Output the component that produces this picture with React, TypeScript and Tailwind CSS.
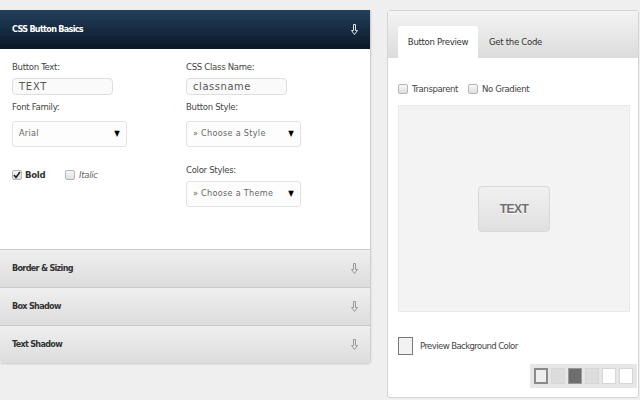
import React from "react";

const font = "font-['DejaVu_Sans_Condensed','Liberation_Sans',sans-serif]";

const Arrow: React.FC<{ className?: string }> = ({ className }) => (
    <svg width="7" height="11" viewBox="0 0 7 11" className={className}>
        <path
            d="M2.5 0.5h2v6h2l-3 4-3-4h2z"
            fill="none"
            stroke="currentColor"
            strokeWidth="1"
        />
    </svg>
);

const Box: React.FC<{ checked?: boolean }> = ({ checked }) => (
    <span className="flex h-[10px] w-[10px] items-center justify-center rounded-[2px] border border-[#b5b5b5] bg-gradient-to-b from-[#f8f8f8] to-[#dedede]">
        {checked && (
            <svg width="8" height="8" viewBox="0 0 8 8">
                <path d="M1 4l2 2.5L7 1" fill="none" stroke="#222" strokeWidth="1.6" />
            </svg>
        )}
    </span>
);

const Select: React.FC<{ label: string }> = ({ label }) => (
    <div className="flex h-[26px] w-[115px] items-center justify-between rounded-[3px] border border-[#e2e2e2] bg-[#fdfdfd] pl-[6px] pr-[6px] text-[9px] tracking-[0.3px] text-[#666]">
        <span>{label}</span>
        <span className="text-[8px] text-black">▼</span>
    </div>
);

const AccRow: React.FC<{ title: string; last?: boolean }> = ({ title, last }) => (
    <div
        className={`flex h-[38px] items-center justify-between border-t border-[#c9c9c9] bg-gradient-to-b from-[#efefef] to-[#dcdcdc] pl-[12px] pr-[12px] ${
            last ? "rounded-b-[3px]" : ""
        }`}
    >
        <span className="text-[9px] font-bold tracking-[-0.7px] text-[#333]">{title}</span>
        <Arrow className="text-[#999]" />
    </div>
);

export default function App() {
    return (
        <div
            className={`${font} flex h-[400px] w-[640px] gap-[16px] overflow-hidden bg-[#efefef] pt-[10px]`}
        >
            <div className="flex h-[353px] w-[371px] flex-col rounded-br-[3px] border-r border-[#d0d0d0] shadow-[0_1px_2px_rgba(0,0,0,0.15)]">
                <div className="flex h-[39px] items-center justify-between bg-gradient-to-b from-[#24405c] to-[#0a1828] pl-[12px] pr-[12px]">
                    <span className="text-[9px] font-bold tracking-[-0.7px] text-white">
                        CSS Button Basics
                    </span>
                    <Arrow className="text-[#dde6ee]" />
                </div>
                <div className="grid h-[200px] grid-cols-[174px_1fr] bg-white pl-[12px] pt-[11px] text-[9.5px] tracking-[-0.3px] text-[#444]">
                    <div className="flex flex-col">
                        <span>Button Text:</span>
                        <div className="mt-[4px] flex h-[17px] w-[101px] items-center rounded-[4px] border border-[#dedede] bg-[#fafafa] pl-[6px] text-[11px] tracking-[0.8px] text-[#555]">
                            TEXT
                        </div>
                        <span className="mt-[5px]">Font Family:</span>
                        <div className="mt-[6px]">
                            <Select label="Arial" />
                        </div>
                        <div className="mt-[21px] flex items-center">
                            <Box checked />
                            <span className="ml-[3px] w-[40px] font-bold text-[#333]">Bold</span>
                            <Box />
                            <span className="ml-[4px] italic text-[#666]">Italic</span>
                        </div>
                    </div>
                    <div className="flex flex-col">
                        <span>CSS Class Name:</span>
                        <div className="mt-[4px] flex h-[17px] w-[101px] items-center rounded-[4px] border border-[#dedede] bg-[#fafafa] pl-[6px] text-[11px] tracking-[0.6px] text-[#555]">
                            classname
                        </div>
                        <span className="mt-[5px]">Button Style:</span>
                        <div className="mt-[6px]">
                            <Select label="» Choose a Style" />
                        </div>
                        <span className="mt-[16px]">Color Styles:</span>
                        <div className="mt-[4px]">
                            <Select label="» Choose a Theme" />
                        </div>
                    </div>
                </div>
                <AccRow title="Border & Sizing" />
                <AccRow title="Box Shadow" />
                <AccRow title="Text Shadow" last />
            </div>

            <div className="flex h-[388px] w-[252px] flex-col rounded-[3px] border border-[#d4d4d4] bg-white">
                <div className="flex h-[47px] items-end bg-gradient-to-b from-[#f3f3f3] to-[#dcdcdc] pl-[10px]">
                    <div className="flex h-[32px] w-[80px] items-center justify-center rounded-t-[3px] bg-white text-[9.5px] tracking-[-0.3px] text-[#333]">
                        Button Preview
                    </div>
                    <div className="flex h-[32px] items-center pl-[11px] text-[9.5px] tracking-[-0.3px] text-[#333]">
                        Get the Code
                    </div>
                </div>
                <div className="flex flex-col px-[10px]">
                    <div className="mt-[24px] flex items-center text-[9.5px] tracking-[-0.4px] text-[#444]">
                        <Box />
                        <span className="ml-[4px]">Transparent</span>
                        <span className="ml-[10px]">
                            <Box />
                        </span>
                        <span className="ml-[4px]">No Gradient</span>
                    </div>
                    <div className="mt-[9px] flex h-[207px] w-[232px] items-center justify-center border border-[#eaeaea] bg-[#f3f3f3]">
                        <div className="flex h-[46px] w-[72px] items-center justify-center rounded-[4px] border border-[#d8d8d8] bg-gradient-to-b from-[#f0f0f0] to-[#e0e0e0] font-['Liberation_Sans',sans-serif] text-[12px] font-bold tracking-[-0.5px] text-[#707070] [text-shadow:0_1px_0_#fff]">
                            TEXT
                        </div>
                    </div>
                    <div className="mt-[25px] flex items-center text-[9.5px] tracking-[-0.6px] text-[#444]">
                        <span className="h-[18px] w-[15px] border border-[#777] bg-[#f2f2f2]" />
                        <span className="ml-[7px]">Preview Background Color</span>
                    </div>
                    <div className="mt-[9px] flex justify-end">
                        <div className="mr-[-9px] flex gap-[3px] bg-[#e6e6e6] p-[4px]">
                            <span className="h-[16px] w-[14px] border-2 border-[#8a8a8a] bg-[#eeeeee]" />
                            <span className="h-[16px] w-[14px] border border-[#d6d6d6] bg-[#dcdcdc]" />
                            <span className="h-[16px] w-[14px] border border-[#999] bg-[#6e6e6e]" />
                            <span className="h-[16px] w-[14px] border border-[#d6d6d6] bg-[#dcdcdc]" />
                            <span className="h-[16px] w-[14px] border border-[#d6d6d6] bg-white" />
                            <span className="h-[16px] w-[14px] border border-[#d6d6d6] bg-white" />
                        </div>
                    </div>
                </div>
            </div>
        </div>
    );
}
